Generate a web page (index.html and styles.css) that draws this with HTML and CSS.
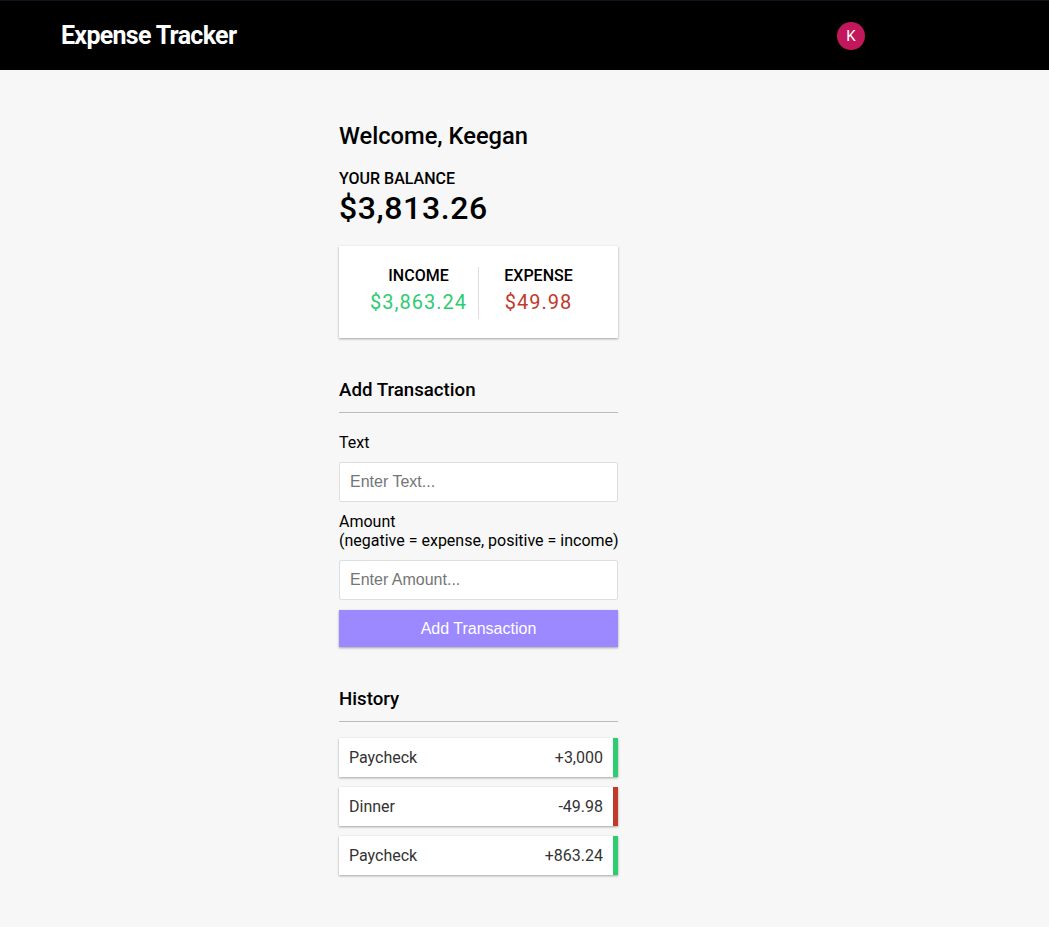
FILE: index.html
```html
<!DOCTYPE html>
<html lang="en">
<head>
<meta charset="utf-8">
<title>Expense Tracker</title>
<link rel="stylesheet" href="styles.css">
</head>
<body>
<header class="appbar">
  <div class="appbar-inner">
    <div class="brand">Expense Tracker</div>
    <div class="avatar">K</div>
  </div>
</header>
<main class="container">
  <h2 class="welcome">Welcome, Keegan</h2>
  <h4 class="caps">Your Balance</h4>
  <h1 class="balance">$3,813.26</h1>

  <div class="inc-exp">
    <div class="col col-first">
      <h4 class="caps">Income</h4>
      <p class="money plus">$3,863.24</p>
    </div>
    <div class="col">
      <h4 class="caps">Expense</h4>
      <p class="money minus">$49.98</p>
    </div>
  </div>

  <h3 class="section">Add Transaction</h3>
  <form class="form">
    <label class="label" for="text">Text</label>
    <input class="input" type="text" id="text" placeholder="Enter Text...">
    <label class="label" for="amount">Amount<br>(negative = expense, positive = income)</label>
    <input class="input" type="text" id="amount" placeholder="Enter Amount...">
    <button class="btn" type="button">Add Transaction</button>
  </form>

  <h3 class="section">History</h3>
  <ul class="list">
    <li class="item plus"><span>Paycheck</span><span>+3,000</span></li>
    <li class="item minus"><span>Dinner</span><span>-49.98</span></li>
    <li class="item plus"><span>Paycheck</span><span>+863.24</span></li>
  </ul>
</main>
</body>
</html>
```

FILE: styles.css
```css
* { box-sizing: border-box; }

body {
  margin: 0;
  background: #f7f7f7;
  font-family: Roboto, "Liberation Sans", Arial, sans-serif;
  color: #000;
}

.appbar {
  background: #000;
  border-top: 1px solid #14141f;
  height: 70px;
}

.appbar-inner {
  height: 69px;
  display: flex;
  align-items: center;
  padding-left: 61px;
}

.brand {
  color: #fff;
  font-size: 25px;
  font-weight: 700;
  letter-spacing: -0.7px;
  width: 776px;
}

.avatar {
  width: 28px;
  height: 28px;
  border-radius: 50%;
  background: #c2185b;
  color: #fff;
  font-size: 15px;
  display: flex;
  align-items: center;
  justify-content: center;
}

.container {
  width: 279px;
  margin: 52px 0 40px 339px;
}

.welcome {
  font-size: 23.7px;
  line-height: 28px;
  font-weight: 500;
  margin: 0 0 20px;
}

.caps {
  margin: 0;
  font-size: 16px;
  line-height: 18px;
  font-weight: 500;
  text-transform: uppercase;
}

.balance {
  margin: 1px 0 0;
  font-size: 32px;
  line-height: 38px;
  font-weight: 500;
  letter-spacing: 0.6px;
}

.inc-exp {
  background: #fff;
  box-shadow: 0 1px 3px rgba(0,0,0,0.12), 0 1px 2px rgba(0,0,0,0.24);
  padding: 21px 20px 19px;
  display: flex;
  margin: 19px 0 20px;
}

.col {
  flex: 1;
  text-align: center;
}

.col-first {
  border-right: 1px solid #dedede;
}

.money {
  font-size: 20px;
  line-height: 24px;
  letter-spacing: 1px;
  margin: 5px 0;
}

.money.plus { color: #2ecc71; }
.money.minus { color: #c0392b; }

.section {
  font-size: 18.7px;
  line-height: 24px;
  font-weight: 500;
  border-bottom: 1px solid #bbb;
  padding-bottom: 10px;
  margin: 40px 0 10px;
}

.form {
  display: flex;
  flex-direction: column;
}

.label {
  font-size: 16px;
  line-height: 19px;
  margin: 10px 0;
  white-space: nowrap;
}

.input {
  display: block;
  width: 100%;
  height: 40px;
  border: 1px solid #dedede;
  border-radius: 2px;
  padding: 10px;
  font-size: 16px;
  font-family: "Liberation Sans", Arial, sans-serif;
  background: #fff;
}

.input::placeholder { color: #757575; }

.btn {
  display: block;
  width: 100%;
  height: 37px;
  margin: 10px 0 0;
  border: 0;
  background: #9c88ff;
  color: #fff;
  font-size: 16px;
  font-family: "Liberation Sans", Arial, sans-serif;
  box-shadow: 0 1px 3px rgba(0,0,0,0.12), 0 1px 2px rgba(0,0,0,0.24);
  cursor: pointer;
}

.list {
  list-style: none;
  padding: 0;
  margin: 16px 0 40px;
}

.item {
  background: #fff;
  color: #333;
  font-size: 16px;
  line-height: 19px;
  display: flex;
  justify-content: space-between;
  padding: 10px;
  margin: 10px 0;
  box-shadow: 0 1px 3px rgba(0,0,0,0.12), 0 1px 2px rgba(0,0,0,0.24);
}

.item.plus { border-right: 5px solid #2ecc71; }
.item.minus { border-right: 5px solid #c0392b; }
```
